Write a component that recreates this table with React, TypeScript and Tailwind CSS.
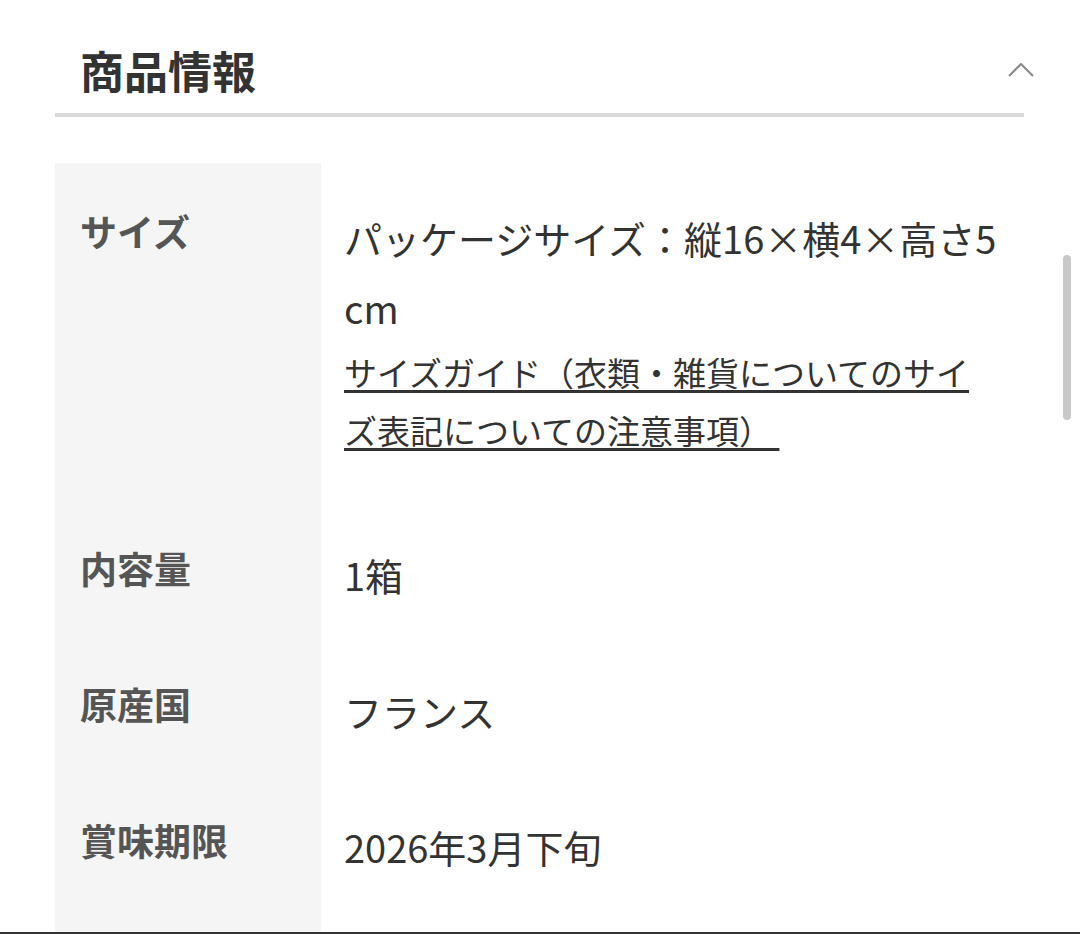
const rows = [
  { label: '内容量', value: '1箱' },
  { label: '原産国', value: 'フランス' },
  { label: '賞味期限', value: '2026年3月下旬' },
]

export default function App() {
  return (
    <div
      className="relative h-[934px] w-[1080px] overflow-hidden bg-white"
      style={{ fontFamily: '"Noto Sans CJK JP", "Noto Sans", sans-serif' }}
    >
      <div className="ml-[55px] w-[969px]">
        <div className="flex h-[113px] items-center justify-between pb-[4px] pl-[25px] pt-[30px]">
          <h2 className="text-[44px] font-bold leading-none text-[#333]">商品情報</h2>
          <svg width="26" height="14" viewBox="0 0 26 14" className="mr-[-10px]">
            <polyline points="1,13 13,1 25,13" fill="none" stroke="#888" strokeWidth="2" />
          </svg>
        </div>
        <div className="h-[4px] bg-[#d9d9d9]" />

        <div className="mt-[46px] grid grid-cols-[266px_1fr]">
          <div className="bg-[#f5f5f5] pl-[25px] pt-[40px] text-[37px] font-bold leading-[56px] text-[#555]">
            サイズ
          </div>
          <div className="pl-[23px] pt-[40px] pb-[48px] text-[#333]">
            <p className="text-[38px] leading-[70px]">
              パッケージサイズ：縦16×横4×高さ5
              <br />
              cm
            </p>
            <a
              href="#"
              className="block text-[33px] leading-[58px] text-[#333] underline decoration-[3px] underline-offset-[4px]"
            >
              サイズガイド（衣類・雑貨についてのサイ
              <br />
              ズ表記についての注意事項）&nbsp;
            </a>
          </div>

          {rows.map((r) => (
            <div key={r.label} className="contents">
              <div className="bg-[#f5f5f5] py-[33px] pl-[25px] text-[37px] font-bold leading-[56px] text-[#555]">
                {r.label}
              </div>
              <div className="py-[33px] pl-[23px] text-[38px] leading-[70px] text-[#333]">{r.value}</div>
            </div>
          ))}
          <div className="h-[40px] bg-[#f5f5f5]" />
          <div />
        </div>
      </div>

      <div className="absolute left-[1063px] top-[255px] h-[165px] w-[8px] rounded-full bg-[#c8c8c8]" />
      <div className="absolute bottom-0 left-0 h-[2px] w-full bg-[#333]" />
    </div>
  )
}
